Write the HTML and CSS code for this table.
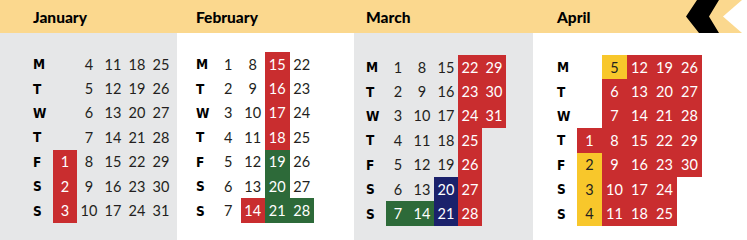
FILE: index.html
```html
<!doctype html>
<html lang="en-us">
	<head>
		<meta charset="utf-8">
		<title>Term calendar: January to April</title>
		<link rel="stylesheet" href="styles.css">
	</head>
	<body>
		<div class="cal">
			<section class="month jan">
				<div class="head"><span class="name">January</span></div>
				<div class="body">
					<div class="grid">
						<div class="d">M</div><div></div><div>4</div><div>11</div><div>18</div><div>25</div>
						<div class="d">T</div><div></div><div>5</div><div>12</div><div>19</div><div>26</div>
						<div class="d">W</div><div></div><div>6</div><div>13</div><div>20</div><div>27</div>
						<div class="d">T</div><div></div><div>7</div><div>14</div><div>21</div><div>28</div>
						<div class="d">F</div><div class="r">1</div><div>8</div><div>15</div><div>22</div><div>29</div>
						<div class="d">S</div><div class="r">2</div><div>9</div><div>16</div><div>23</div><div>30</div>
						<div class="d">S</div><div class="r">3</div><div>10</div><div>17</div><div>24</div><div>31</div>
					</div>
				</div>
			</section>

			<section class="month feb">
				<div class="head"><span class="name">February</span></div>
				<div class="body">
					<div class="grid">
						<div class="d">M</div><div>1</div><div>8</div><div class="r">15</div><div>22</div>
						<div class="d">T</div><div>2</div><div>9</div><div class="r">16</div><div>23</div>
						<div class="d">W</div><div>3</div><div>10</div><div class="r">17</div><div>24</div>
						<div class="d">T</div><div>4</div><div>11</div><div class="r">18</div><div>25</div>
						<div class="d">F</div><div>5</div><div>12</div><div class="g">19</div><div>26</div>
						<div class="d">S</div><div>6</div><div>13</div><div class="g">20</div><div>27</div>
						<div class="d">S</div><div>7</div><div class="r">14</div><div class="g">21</div><div class="g">28</div>
					</div>
				</div>
			</section>

			<section class="month mar">
				<div class="head"><span class="name">March</span></div>
				<div class="body">
					<div class="grid">
						<div class="d">M</div><div>1</div><div>8</div><div>15</div><div class="r">22</div><div class="r">29</div>
						<div class="d">T</div><div>2</div><div>9</div><div>16</div><div class="r">23</div><div class="r">30</div>
						<div class="d">W</div><div>3</div><div>10</div><div>17</div><div class="r">24</div><div class="r">31</div>
						<div class="d">T</div><div>4</div><div>11</div><div>18</div><div class="r">25</div><div></div>
						<div class="d">F</div><div>5</div><div>12</div><div>19</div><div class="r">26</div><div></div>
						<div class="d">S</div><div>6</div><div>13</div><div class="b">20</div><div class="r">27</div><div></div>
						<div class="d">S</div><div class="g">7</div><div class="g">14</div><div class="b">21</div><div class="r">28</div><div></div>
					</div>
				</div>
			</section>

			<section class="month apr">
				<div class="head">
					<span class="name">April</span>
					<svg class="arrow" width="64" height="33" viewBox="0 0 64 33">
						<polygon points="14,0 36,0 26,16.5 36,33 16,33 3,16.5" fill="#000"/>
						<polygon points="59,0 64,0 64,33 59,33 40,16.5" fill="#fff"/>
					</svg>
				</div>
				<div class="body">
					<div class="grid">
						<div class="d">M</div><div></div><div class="y">5</div><div class="r">12</div><div class="r">19</div><div class="r">26</div>
						<div class="d">T</div><div></div><div class="r">6</div><div class="r">13</div><div class="r">20</div><div class="r">27</div>
						<div class="d">W</div><div></div><div class="r">7</div><div class="r">14</div><div class="r">21</div><div class="r">28</div>
						<div class="d">T</div><div class="r">1</div><div class="r">8</div><div class="r">15</div><div class="r">22</div><div class="r">29</div>
						<div class="d">F</div><div class="y">2</div><div class="r">9</div><div class="r">16</div><div class="r">23</div><div class="r">30</div>
						<div class="d">S</div><div class="y">3</div><div class="r">10</div><div class="r">17</div><div class="r">24</div><div></div>
						<div class="d">S</div><div class="y">4</div><div class="r">11</div><div class="r">18</div><div class="r">25</div><div></div>
					</div>
				</div>
			</section>
		</div>
	</body>
</html>
```

FILE: styles.css
```css
body {
	margin: 0;
	background: #fff;
	font-family: Lato, "Open Sans", sans-serif;
	color: #231f20;
}

.cal {
	display: flex;
	width: 747px;
	height: 240px;
}

.month { display: flex; flex-direction: column; }
.jan { width: 177px; }
.feb { width: 177px; }
.mar { width: 179px; }
.apr { width: 214px; }

.head {
	display: flex;
	align-items: center;
	height: 33px;
	background: #fbd88e;
	font-weight: 900;
	font-size: 15.5px;
	color: #000;
}
.name { padding-top: 1px; }
.arrow { margin-left: auto; display: block; }

.body { flex: 1; }
.jan .body, .mar .body { background: #e6e7e8; }

.jan .head, .jan .body { padding-left: 33px; }
.feb .head, .feb .body { padding-left: 19px; }
.mar .head, .mar .body { padding-left: 12px; }
.apr .head, .apr .body { padding-left: 24px; }

.jan .body, .feb .body { padding-top: 19px; }
.mar .body, .apr .body { padding-top: 22px; }

.grid {
	display: grid;
	grid-auto-rows: 24.4px;
	font-size: 14.5px;
}
.jan .grid, .mar .grid { grid-template-columns: 20px repeat(5, 24px); }
.feb .grid { grid-template-columns: 20px repeat(4, 24.5px); }
.apr .grid { grid-template-columns: 20px repeat(5, 25px); }

.grid div {
	display: flex;
	align-items: center;
	justify-content: center;
}

/* weekday letters */
.grid .d {
	justify-content: flex-start;
	font-family: "DejaVu Sans Condensed", "DejaVu Sans", sans-serif;
	font-stretch: condensed;
	font-weight: 700;
	font-size: 13.5px;
	color: #000;
}

.r { background: #c92d2f; color: #fff; }
.g { background: #2d6a39; color: #fff; }
.b { background: #1b216b; color: #fff; }
.y { background: #f8c72b; }
```
